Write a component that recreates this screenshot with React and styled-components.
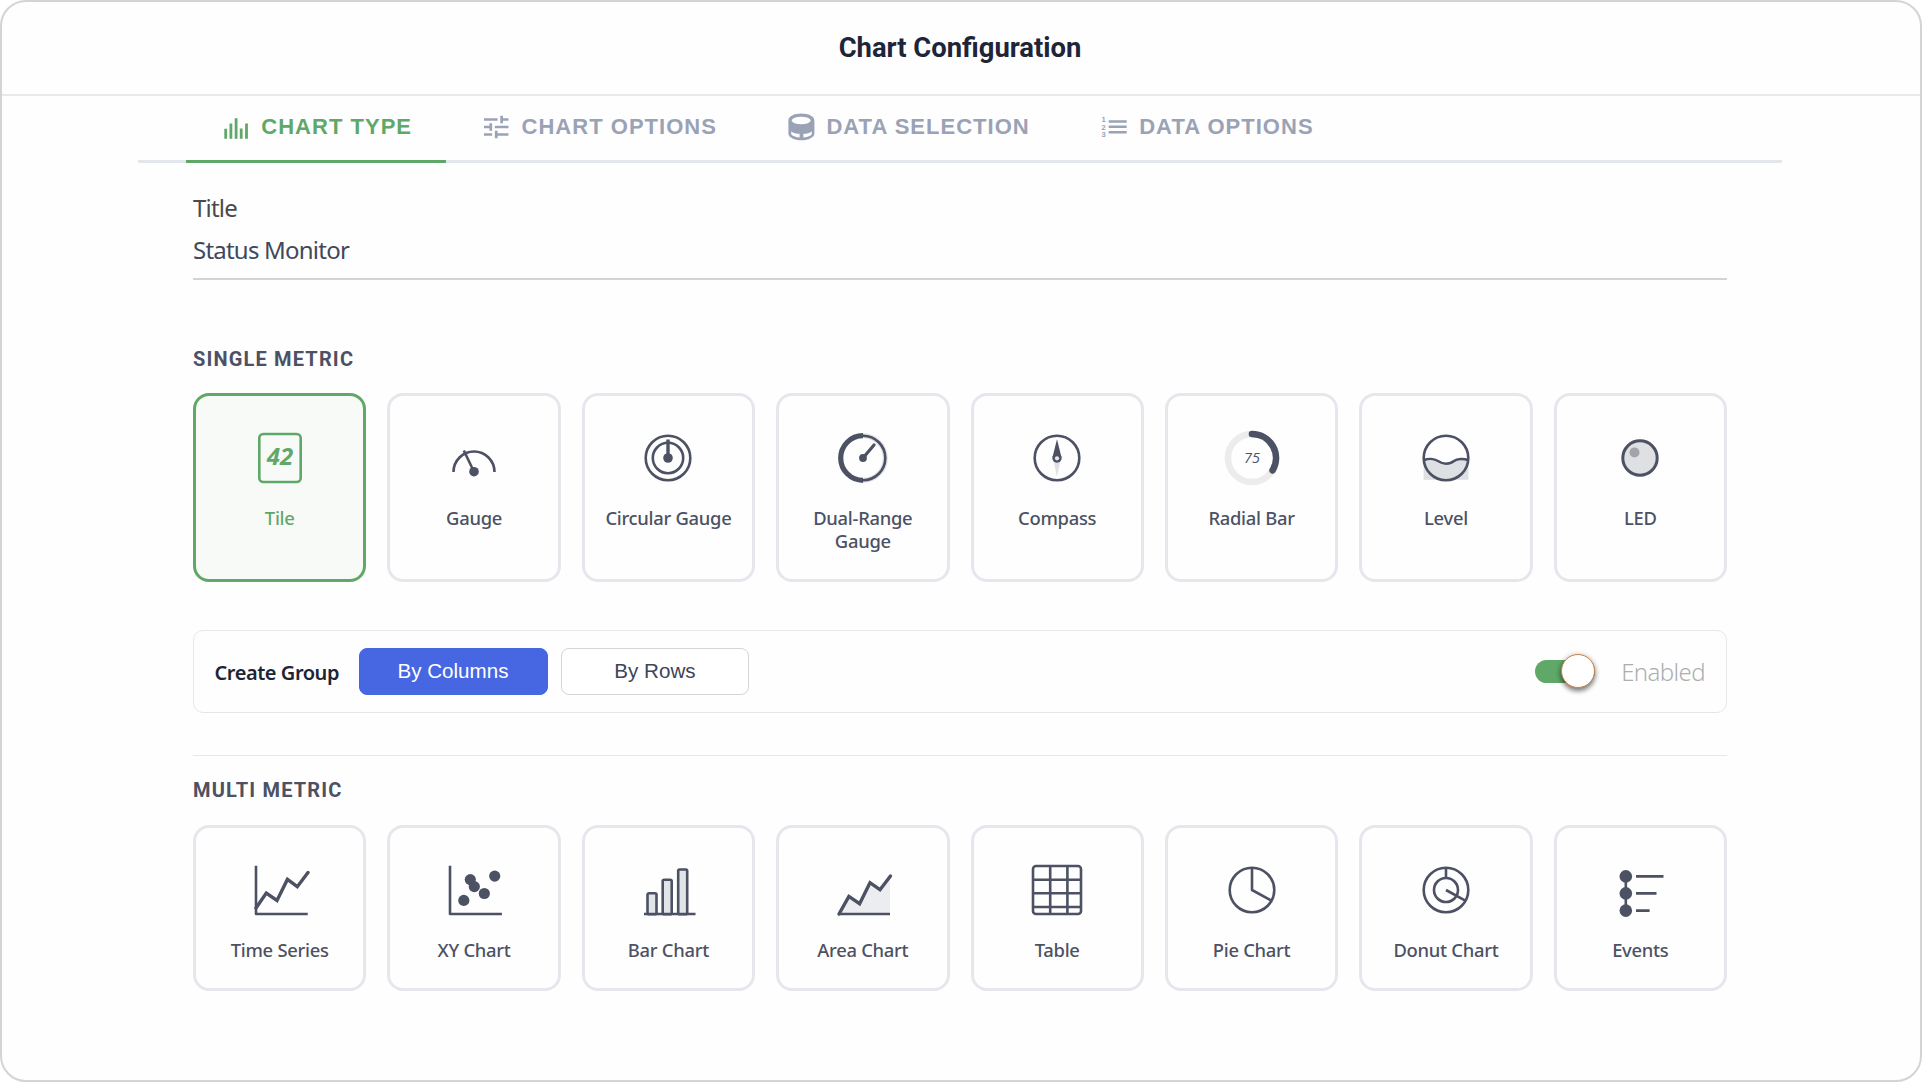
import React, { useState } from 'react';
import styled, { createGlobalStyle } from 'styled-components';

const INK = '#4c5163';
const GREEN = '#5fa868';

const GlobalStyle = createGlobalStyle`
    * {
        box-sizing: border-box;
    }

    body {
        margin: 0;
        background: #fff;
        font-family: "Noto Sans", "Open Sans", sans-serif;
        color: ${INK};
    }

    button {
        font: inherit;
        color: inherit;
        cursor: pointer;
    }
`;

const StyledDialog = styled.div`
    display: flex;
    flex-direction: column;
    width: 1922px;
    height: 1082px;
    border: 2px solid #d4d4d4;
    border-radius: 26px;
    background: #fefefe;
    overflow: hidden;
`;

const StyledHeader = styled.header`
    display: flex;
    align-items: center;
    justify-content: center;
    height: 94px;
    padding-right: 2px;
    border-bottom: 2px solid #e9e9e9;
`;

const StyledHeading = styled.h1`
    margin: 0;
    font: 700 27.4px/32px Roboto, sans-serif;
    color: #1f2539;
`;

const StyledTabs = styled.nav`
    display: flex;
    height: 67px;
    margin: 0 138.5px 0 136px;
    padding-left: 48px;
    border-bottom: 3px solid #e4e6ee;
`;

const StyledTab = styled.button`
    display: flex;
    align-items: center;
    gap: 11.5px;
    height: 67px;
    padding: 0 34.2px 3px 35.8px;
    border: 0;
    border-bottom: 3px solid ${({ $active }) => ($active ? GREEN : 'transparent')};
    background: none;
    color: ${({ $active }) => ($active ? GREEN : '#9aa2b5')};
    font: 700 22px/26px "Liberation Sans", Arial, sans-serif;
    letter-spacing: 1.02px;
    white-space: nowrap;

    svg {
        flex: none;
        margin-top: 1px;
    }
`;

const StyledBody = styled.main`
    display: flex;
    flex-direction: column;
    padding: 29px 193px 0 191px;
`;

const StyledField = styled.label`
    display: flex;
    flex-direction: column;
    gap: 5px;
    font-size: 24px;
    line-height: 32px;
    letter-spacing: -0.78px;
    color: #4a4a4c;
`;

const StyledInput = styled.input`
    height: 51px;
    padding: 0 0 9px;
    border: 0;
    border-bottom: 2px solid #d3d4d6;
    outline: 0;
    background: none;
    font: inherit;
    letter-spacing: inherit;
    color: #41485a;
`;

const StyledSectionTitle = styled.h2`
    margin: ${({ $top }) => $top}px 0 22.3px;
    font: 700 20px/24px Roboto, sans-serif;
    letter-spacing: 1.16px;
    color: ${INK};
`;

const StyledGrid = styled.div`
    display: grid;
    grid-template-columns: repeat(8, 1fr);
    grid-auto-rows: ${({ $rowHeight }) => $rowHeight}px;
    column-gap: 21px;
`;

const StyledCard = styled.button`
    display: flex;
    flex-direction: column;
    align-items: center;
    gap: 16px;
    padding: 30px 12px 0;
    border: 3px solid ${({ $selected }) => ($selected ? GREEN : '#e5e7ec')};
    border-radius: 16px;
    background: ${({ $selected }) => ($selected ? '#f8faf8' : '#fefefe')};
    color: ${({ $selected }) => ($selected ? GREEN : INK)};
    font-weight: 500;
    font-size: 18.4px;
    line-height: 23px;
    letter-spacing: -0.28px;
`;

const StyledGlyph = styled.svg`
    flex: none;
    overflow: visible;
    fill: none;
    stroke: currentColor;
    stroke-width: 2.6;

    text {
        font-family: "Open Sans", "Noto Sans", sans-serif;
        font-style: italic;
        letter-spacing: 0;
        text-anchor: middle;
        fill: currentColor;
        stroke: none;
    }
`;

const StyledGroup = styled.section`
    display: flex;
    align-items: center;
    height: 83px;
    margin-top: 48px;
    padding: 0 21px 0 20.5px;
    border: 1.5px solid #e6e7e9;
    border-radius: 10px;
`;

const StyledGroupLabel = styled.span`
    margin-right: 20px;
    padding-top: 2px;
    font-weight: 600;
    font-size: 20px;
    letter-spacing: -0.45px;
    color: #1f2433;
`;

const StyledModeButton = styled.button`
    width: ${({ $active }) => ($active ? 189 : 188)}px;
    height: 47px;
    margin-right: 13.5px;
    padding: 0 1px 1px 0;
    border: 1.5px solid ${({ $active }) => ($active ? '#4666e2' : '#d3d5da')};
    border-radius: 8px;
    background: ${({ $active }) => ($active ? '#4666e2' : '#fff')};
    color: ${({ $active }) => ($active ? '#fff' : '#3e4557')};
    font: 400 20.6px/24px "Liberation Sans", Arial, sans-serif;
`;

const StyledSwitch = styled.button`
    display: flex;
    align-items: center;
    justify-content: ${({ $on }) => ($on ? 'flex-end' : 'flex-start')};
    width: 60px;
    height: 23px;
    margin: 0 26px 0 auto;
    padding: 0;
    border: 0;
    border-radius: 12px;
    background: ${({ $on }) => ($on ? GREEN : '#c4c4c4')};
`;

const StyledKnob = styled.span`
    flex: none;
    width: 34px;
    height: 34px;
    border: 1.5px solid #c98146;
    border-radius: 50%;
    background: #fff;
    box-shadow: 0 3px 5px rgba(0, 0, 0, 0.45), 0 1px 6px rgba(0, 0, 0, 0.2);
`;

const StyledSwitchLabel = styled.span`
    font-weight: 300;
    font-size: 24px;
    letter-spacing: -0.6px;
    color: #aeaeae;
`;

const StyledDivider = styled.hr`
    width: 100%;
    height: 1px;
    margin: 42px 0 0;
    border: 0;
    background: #e6e7e9;
`;

const TabIcon = ({ children }) => (
    <svg width="28" height="28" viewBox="0 0 28 28" fill="currentColor">{children}</svg>
);

const tabs = [
    {
        label: 'CHART TYPE',
        icon: (
            <path d="M2.3 15.8h2.8v10H2.3zM7.5 10.5h2.8v15.3H7.5zM12.7 5.2h2.8v20.6h-2.8zM17.8 15.5h2.8v10.3h-2.8zM23.1 10.5h2.8v15.3h-2.8z" />
        ),
    },
    {
        label: 'CHART OPTIONS',
        icon: (
            <path
                transform="translate(-2.1 -0.9) scale(1.36 1.245)"
                d="M3 17v2h6v-2H3zM3 5v2h10V5H3zm10 16v-2h8v-2h-8v-2h-2v6h2zM7 9v2H3v2h4v2h2V9H7zm14 4v-2H11v2h10zm-6-4h2V7h4V5h-4V3h-2v6z"
            />
        ),
    },
    {
        label: 'DATA SELECTION',
        icon: (
            <>
                <path d="M1.4 7.4C1.4 3.5 7.2.6 14.4.6s13 2.9 13 6.8v13c0 3.9-5.8 6.8-13 6.8s-13-2.9-13-6.8z" />
                <g fill="#fefefe">
                    <ellipse cx="14.2" cy="7.5" rx="9.4" ry="3.8" />
                    <path d="M4.2 18.4c2 1.4 5 2.2 8.4 2.4v3.6c-4.8-.2-8.4-1.8-8.4-3.8z" />
                    <path d="M24.8 18.4c-2 1.4-5 2.2-8.4 2.4v3.6c4.8-.2 8.4-1.8 8.4-3.8z" />
                </g>
            </>
        ),
    },
    {
        label: 'DATA OPTIONS',
        icon: (
            <>
                <path d="M8.7 7.2h18v2.6h-18zM8.7 12.5h18v2.6h-18zM8.7 17.9h18v2.6h-18z" />
                <g fontFamily="Liberation Sans, sans-serif" fontSize="7.6" letterSpacing="0">
                    <text x="1.6" y="9.2">1</text>
                    <text x="1.6" y="16.7">2</text>
                    <text x="1.6" y="24.4">3</text>
                </g>
            </>
        ),
    },
];

// card drawings share a 64px box with the origin in its middle
const singleMetric = [
    {
        label: 'Tile',
        icon: (
            <>
                <rect x="-20.7" y="-24" width="41.4" height="48" rx="4" />
                <text y="6.7" fontSize="24" fontWeight="700">42</text>
            </>
        ),
    },
    {
        label: 'Gauge',
        icon: (
            <>
                <path d="M-20.5 14a20.5 20.5 0 0 1 41 0" />
                <path d="M0 13.7L-10.2-7.5" />
                <circle cy="13.7" r="4.8" fill="currentColor" stroke="none" />
            </>
        ),
    },
    {
        label: 'Circular Gauge',
        icon: (
            <>
                <circle r="22.3" />
                <circle r="15.2" />
                <path d="M0 0V-18.5" strokeWidth="3.4" />
                <circle r="4.8" fill="currentColor" stroke="none" />
            </>
        ),
    },
    {
        label: 'Dual-Range Gauge',
        icon: (
            <>
                <path d="M0-22.3a22.3 22.3 0 0 1 0 44.6" stroke="#dfe1e6" strokeWidth="5" />
                <circle r="22.3" />
                <path d="M0-22.3a22.3 22.3 0 0 0 0 44.6" strokeWidth="5.2" />
                <path d="M0 0L11-13" strokeWidth="3.2" strokeLinecap="round" />
                <circle r="3.9" fill="currentColor" stroke="none" />
            </>
        ),
    },
    {
        label: 'Compass',
        icon: (
            <>
                <circle r="22.3" />
                <g stroke="none">
                    <path d="M-4.2 0L0 18.5L4.2 0z" fill="#dfe1e4" />
                    <path d="M-4.4-1L0-18.7L4.4-1z" fill="currentColor" />
                    <circle r="4.7" fill="currentColor" />
                    <circle cy=".3" r="2.1" fill="#e8e9ec" />
                </g>
            </>
        ),
    },
    {
        label: 'Radial Bar',
        icon: (
            <>
                <circle r="24" stroke="#ececec" strokeWidth="6.6" />
                <path d="M0-24A24 24 0 0 1 20.6 12.3" strokeWidth="6.6" strokeLinecap="round" />
                <text y="4.9" fontSize="14.4" fontWeight="500">75</text>
            </>
        ),
    },
    {
        label: 'Level',
        icon: (
            <>
                <path
                    d="M-22.4 2.3C-18 .3-12 .5-8 3S-3 5.7 0 5.7S5 5.5 8 3S18 .3 22.4 2.3V21.7H-22.4z"
                    fill="#dfe0e4"
                    stroke="none"
                />
                <path d="M-22.3 2.3C-18 .3-12 .5-8 3S-3 5.7 0 5.7S5 5.5 8 3S18 .3 22.3 2.3" />
                <circle r="22.3" />
            </>
        ),
    },
    {
        label: 'LED',
        icon: (
            <>
                <circle r="17.2" fill="#dfe0e4" strokeWidth="3" />
                <circle cx="-5.5" cy="-5.6" r="5" fill="#a2a4ac" stroke="none" />
            </>
        ),
    },
];

const multiMetric = [
    {
        label: 'Time Series',
        icon: (
            <>
                <path d="M-24-24.3V24H27.7" strokeLinejoin="round" />
                <path d="M-24 18L-13.7 3L-3 10.4L7.4-10.6L17.3-3.3L28-17.5" strokeWidth="3.4" strokeLinecap="round" />
            </>
        ),
    },
    {
        label: 'XY Chart',
        icon: (
            <>
                <path d="M-24-24.3V24H27.9" strokeLinejoin="round" />
                <g fill="currentColor" stroke="none">
                    <circle cx="-10.2" cy="10.4" r="5.6" />
                    <circle cx="-3.7" cy="-10.4" r="5.6" />
                    <circle cx=".3" cy="-3.4" r="5.6" />
                    <circle cx="10.3" cy="3.5" r="5.6" />
                    <circle cx="20.7" cy="-13.9" r="5.6" />
                </g>
            </>
        ),
    },
    {
        label: 'Bar Chart',
        icon: (
            <>
                <g fill="#e2e5e8">
                    <rect x="-20.5" y="3.3" width="9" height="21" rx="1.5" />
                    <rect x="-5.3" y="-10.3" width="9" height="34.6" rx="1.5" />
                    <rect x="10.2" y="-20.5" width="9" height="44.8" rx="1.5" />
                </g>
                <path d="M-24 24H27.5" />
            </>
        ),
    },
    {
        label: 'Area Chart',
        icon: (
            <>
                <path d="M-24 24L-14.1 6.4L-3.4 13.7L7-7.3L17-.3L27-14V24z" fill="#ecedf0" stroke="none" />
                <path d="M-24.5 24H27" />
                <path d="M-24 24L-14.1 6.4L-3.4 13.7L7-7.3L17-.3L27.5-14" strokeWidth="3.4" strokeLinecap="round" />
            </>
        ),
    },
    {
        label: 'Table',
        icon: (
            <>
                <rect x="-24" y="-24" width="48" height="48" rx="3" />
                <path d="M-6.8-24V24M10.4-24V24M-24-10.3H24M-24 3.3H24M-24 17H24" />
            </>
        ),
    },
    {
        label: 'Pie Chart',
        icon: (
            <>
                <circle r="22.3" />
                <path d="M0-22.3V0L19.5 10.7" strokeLinejoin="round" />
            </>
        ),
    },
    {
        label: 'Donut Chart',
        icon: (
            <>
                <circle r="22.3" />
                <circle r="12" />
                <path d="M0-22.3V-12M0 0L19.3 10.7" />
            </>
        ),
    },
    {
        label: 'Events',
        icon: (
            <>
                <path d="M-14.2-13.6V20.6M-4-13.6H23.5M-4 3.4H16.5M-4 20.6H9.6" />
                <g fill="currentColor" stroke="none">
                    <circle cx="-14.2" cy="-13.6" r="6.3" />
                    <circle cx="-14.2" cy="3.4" r="6.3" />
                    <circle cx="-14.2" cy="20.6" r="6.3" />
                </g>
            </>
        ),
    },
];

const ChartGrid = ({ charts, rowHeight, selected, onSelect }) => (
    <StyledGrid $rowHeight={rowHeight}>
        {charts.map(({ label, icon }) => (
            <StyledCard key={label} $selected={label === selected} onClick={() => onSelect(label)}>
                <StyledGlyph width="64" height="64" viewBox="-32 -32 64 64">{icon}</StyledGlyph>
                {label}
            </StyledCard>
        ))}
    </StyledGrid>
);

const App = () => {
    const [tab, setTab] = useState('CHART TYPE');
    const [title, setTitle] = useState('Status Monitor');
    const [chart, setChart] = useState('Tile');
    const [mode, setMode] = useState('By Columns');
    const [enabled, setEnabled] = useState(true);

    return (
        <StyledDialog>
            <GlobalStyle />
            <StyledHeader>
                <StyledHeading>Chart Configuration</StyledHeading>
            </StyledHeader>
            <StyledTabs>
                {tabs.map(({ label, icon }) => (
                    <StyledTab key={label} $active={label === tab} onClick={() => setTab(label)}>
                        <TabIcon>{icon}</TabIcon>
                        {label}
                    </StyledTab>
                ))}
            </StyledTabs>
            <StyledBody>
                <StyledField>
                    Title
                    <StyledInput value={title} onChange={(e) => setTitle(e.target.value)} />
                </StyledField>
                <StyledSectionTitle $top={67}>SINGLE METRIC</StyledSectionTitle>
                <ChartGrid charts={singleMetric} rowHeight={188.4} selected={chart} onSelect={setChart} />
                <StyledGroup>
                    <StyledGroupLabel>Create Group</StyledGroupLabel>
                    {['By Columns', 'By Rows'].map((name) => (
                        <StyledModeButton key={name} $active={name === mode} onClick={() => setMode(name)}>
                            {name}
                        </StyledModeButton>
                    ))}
                    <StyledSwitch $on={enabled} onClick={() => setEnabled(!enabled)}>
                        <StyledKnob />
                    </StyledSwitch>
                    <StyledSwitchLabel>Enabled</StyledSwitchLabel>
                </StyledGroup>
                <StyledDivider />
                <StyledSectionTitle $top={22.6}>MULTI METRIC</StyledSectionTitle>
                <ChartGrid charts={multiMetric} rowHeight={166} selected={chart} onSelect={setChart} />
            </StyledBody>
        </StyledDialog>
    );
};

export default App;
